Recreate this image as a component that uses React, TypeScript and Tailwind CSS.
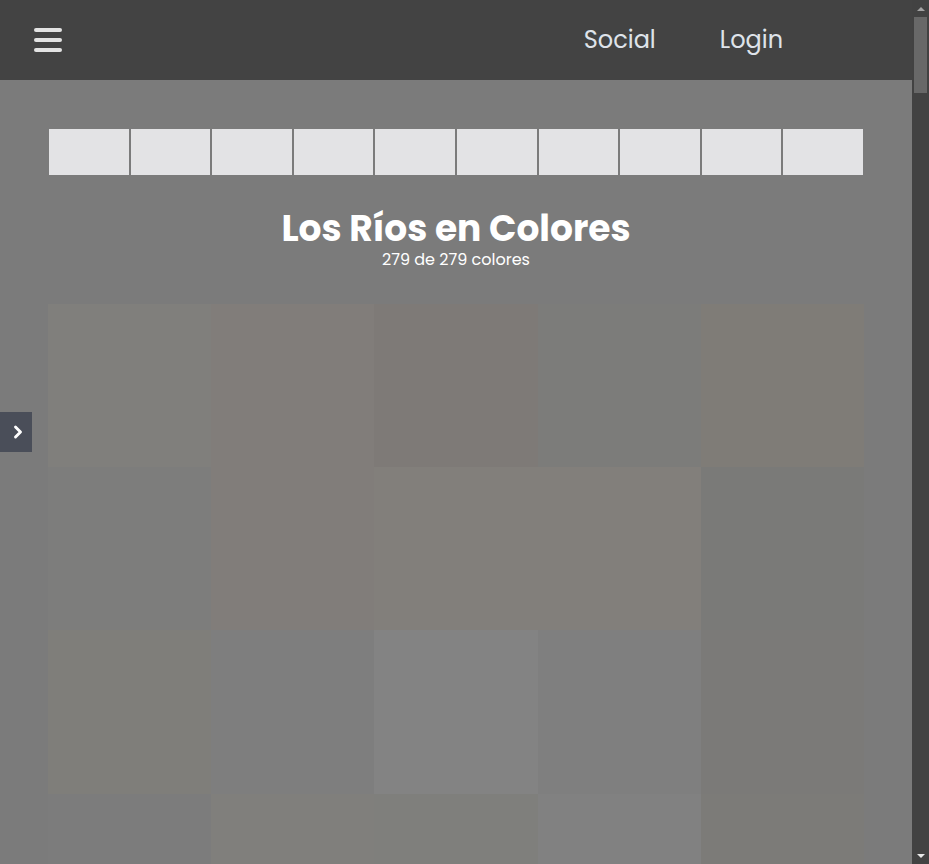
import { ChevronRight } from "lucide-react";

// tonos apagados, como se ven bajo la capa oscura
const FIRST_ROWS = [
  "#807f7c", "#817d7a", "#7e7a77", "#7c7c7a", "#7f7c77",
  "#7d7d7c", "#817d7a", "#827f7b", "#827f7b", "#7a7a78",
  "#7f7e7a", "#7e7e7e", "#838383", "#7f7f7f", "#7b7a78",
  "#7c7c7c", "#807f7c", "#7f7f7c", "#818181", "#7c7b78",
];

const TONOS = ["#7e7c79", "#807e7b", "#7c7c7b", "#82807c", "#7d7b78", "#818181", "#7f7d7a", "#7b7b79"];

const colores: string[] = Array.from({ length: 279 }, (_, i) =>
  i < FIRST_ROWS.length ? FIRST_ROWS[i] : TONOS[(i * 7 + 3) % TONOS.length]
);

const font = { fontFamily: "Poppins, 'Open Sans', 'Liberation Sans', sans-serif" };

function ScrollBar() {
  return (
    <div className="w-[17px] shrink-0 bg-[#424242] flex flex-col items-center">
      <div className="h-[17px] flex items-center justify-center">
        <div className="w-0 h-0 border-x-[4px] border-x-transparent border-b-[4px] border-b-[#a3a3a3]" />
      </div>
      <div className="w-[13px] h-[76px] bg-[#686868]" />
      <div className="flex-1" />
      <div className="h-[17px] flex items-center justify-center">
        <div className="w-0 h-0 border-x-[4px] border-x-transparent border-t-[4px] border-t-[#e8e8e8]" />
      </div>
    </div>
  );
}

export default function App() {
  return (
    <div className="h-screen overflow-hidden flex bg-[#7b7b7b]" style={font}>
      <div className="flex-1 min-w-0 overflow-hidden relative">
        <header className="h-20 bg-[#434343] flex items-center px-[34px]">
          <button className="flex flex-col gap-[6px] w-7">
            <span className="block h-1 rounded-full bg-[#e3e3e3]" />
            <span className="block h-1 rounded-full bg-[#e3e3e3]" />
            <span className="block h-1 rounded-full bg-[#e3e3e3]" />
          </button>
          <nav className="ml-auto flex items-center gap-16 mr-[95px] text-[24px] text-[#dfe3ea]">
            <a>Social</a>
            <a>Login</a>
          </nav>
        </header>

        <main className="px-12 pb-12">
          <div className="mt-12 flex h-12">
            {Array.from({ length: 10 }).map((_, i) => (
              <div key={i} className="flex-1 bg-[#e3e3e5] border border-[#7b7b7b]" />
            ))}
          </div>

          <div className="mt-[35px] text-center text-white">
            <h1 className="text-[36px] leading-9 font-bold">Los Ríos en Colores</h1>
            <p className="text-[16px] leading-5 mt-[3px]">279 de 279 colores</p>
          </div>

          <div className="mt-[34px] grid grid-cols-5">
            {colores.map((c, i) => (
              <div key={i} className="aspect-square" style={{ backgroundColor: c }} />
            ))}
          </div>
        </main>

        <button className="absolute left-0 top-[412px] w-8 h-10 pl-1 bg-[#4a4e59] flex items-center justify-center text-white">
          <ChevronRight size={20} strokeWidth={3.5} />
        </button>
      </div>
      <ScrollBar />
    </div>
  );
}
